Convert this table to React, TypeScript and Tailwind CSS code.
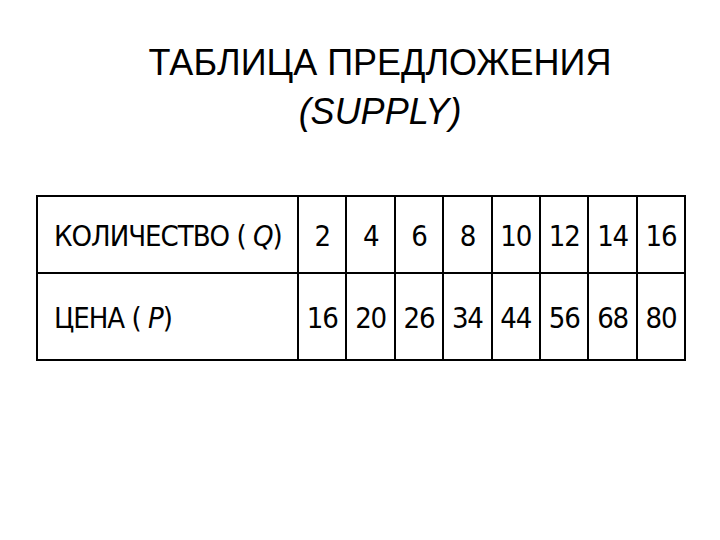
import React from "react";

const q = ["2", "4", "6", "8", "10", "12", "14", "16"];
const p = ["16", "20", "26", "34", "44", "56", "68", "80"];

export default function App() {
  return (
    <div className="w-[720px] h-[540px] bg-white text-black overflow-hidden">
      <div
        className="pt-[38px] pl-[40px] text-center text-[36px] leading-[49px]"
        style={{ fontFamily: '"Liberation Sans", Arial, sans-serif' }}
      >
        <div>ТАБЛИЦА ПРЕДЛОЖЕНИЯ</div>
        <div className="italic">(SUPPLY)</div>
      </div>
      <div className="pt-[59px] pl-[36px]">
        <table
          className="border-collapse text-[29px] [font-stretch:condensed]"
          style={{ fontFamily: '"DejaVu Sans Condensed", "DejaVu Sans", Verdana, sans-serif' }}
        >
          <tbody>
            <tr className="h-[77px]">
              <td className="w-[261px] border-2 border-black pl-[16px] pt-[5px] tracking-[-1px]">
                КОЛИЧЕСТВО ( <i>Q</i>)
              </td>
              {q.map((v, i) => (
                <td key={i} className="w-[48.4px] border-2 border-black text-center px-0 pt-[5px] tracking-[-1.2px]">
                  {v}
                </td>
              ))}
            </tr>
            <tr className="h-[87px]">
              <td className="border-2 border-black pl-[16px] pt-[4px] tracking-[-1px]">
                ЦЕНА ( <i>P</i>)
              </td>
              {p.map((v, i) => (
                <td key={i} className="border-2 border-black text-center px-0 pt-[4px] tracking-[-1.2px]">
                  {v}
                </td>
              ))}
            </tr>
          </tbody>
        </table>
      </div>
    </div>
  );
}
